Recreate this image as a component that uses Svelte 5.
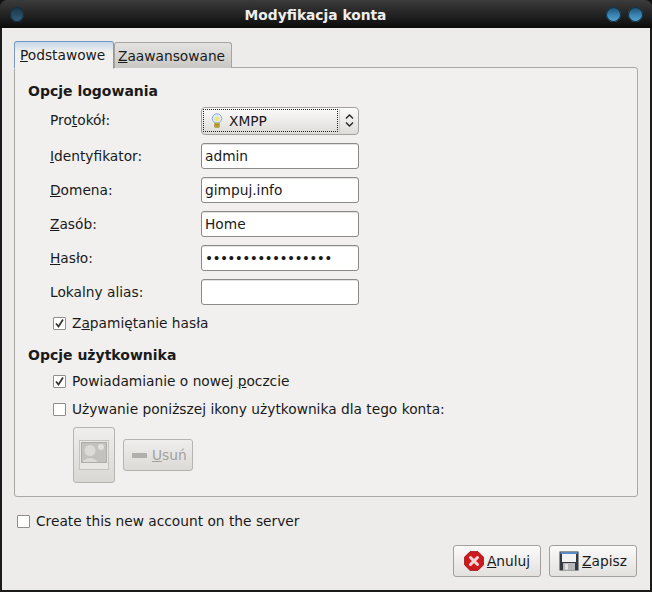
<script>
  const rows = [
    { u: 'I', post: 'dentyfikator:', value: 'admin' },
    { u: 'D', post: 'omena:', value: 'gimpuj.info' },
    { u: 'Z', post: 'asób:', value: 'Home' },
    { u: 'H', post: 'asło:', value: '•••••••••••••••••', pw: true },
    { u: '', post: 'Lokalny alias:', value: '' }
  ];
</script>

<div class="win">
  <header class="titlebar">
    <span class="orb dim"></span>
    <span class="title">Modyfikacja konta</span>
    <span class="orb"></span>
    <span class="orb"></span>
  </header>
  <div class="body">
    <div class="tabs">
      <div class="tab active"><u>P</u>odstawowe</div>
      <div class="tab"><u>Z</u>aawansowane</div>
    </div>
    <section class="panel">
      <h2>Opcje logowania</h2>
      <div class="form">
        <div class="row first">
          <span class="lab up">Pro<u>t</u>okół:</span>
          <div class="combo">
            <div class="combo-main">
              <svg width="12" height="16" viewBox="0 0 12 16">
                <circle cx="6" cy="5.5" r="4.7" fill="#dfecf8" stroke="#86add4" />
                <circle cx="6" cy="6" r="2.4" fill="#f4e27a" />
                <rect x="3.5" y="10" width="5" height="4.5" rx="1" fill="#d8b93c" stroke="#a48a2a" stroke-width=".6" />
                <path d="M4 11.6h4M4 13h4" stroke="#8a7420" stroke-width=".7" />
              </svg>
              <span>XMPP</span>
            </div>
            <svg class="arrows" width="9" height="13" viewBox="0 0 9 13">
              <path d="M1 4.5l3.5-3.5L8 4.5M1 8.5l3.5 3.5L8 8.5" fill="none" stroke="#222" stroke-width="1.3" />
            </svg>
          </div>
        </div>
        {#each rows as r}
          <div class="row">
            <span class="lab">{#if r.u}<u>{r.u}</u>{/if}{r.post}</span>
            <div class="entry" class:pw={r.pw}>{r.value}</div>
          </div>
        {/each}
      </div>
      <div class="check indent rem">
        <span class="box"><svg width="11" height="11" viewBox="0 0 11 11"><path d="M2 5.5l2.5 3L9 1.5" fill="none" stroke="#333" stroke-width="1.7" /></svg></span>
        <span>Z<u>a</u>pamiętanie hasła</span>
      </div>
      <h2 class="second">Opcje użytkownika</h2>
      <div class="check indent">
        <span class="box"><svg width="11" height="11" viewBox="0 0 11 11"><path d="M2 5.5l2.5 3L9 1.5" fill="none" stroke="#333" stroke-width="1.7" /></svg></span>
        <span>Powiadamianie o nowej <u>p</u>oczcie</span>
      </div>
      <div class="check indent next">
        <span class="box"></span>
        <span>Używanie poniższej ikony użytkownika dla tego konta:</span>
      </div>
      <div class="icon-row">
        <div class="avatar-btn">
          <svg width="30" height="30" viewBox="0 0 30 30">
            <rect x=".5" y=".5" width="29" height="29" fill="#e8e7e4" stroke="#c4c3bf" />
            <rect x="2.5" y="2.5" width="25" height="20" fill="#c2c3bf" stroke="#adadaa" />
            <circle cx="11" cy="10.5" r="5.5" fill="#dcdbd7" />
            <circle cx="22" cy="7" r="3" fill="#e2e1dd" />
            <path d="M4 22c1-5 13-5 14 0z" fill="#dbdad6" />
          </svg>
        </div>
        <div class="remove-btn">
          <span class="minus"></span>
          <span><u>U</u>suń</span>
        </div>
      </div>
    </section>
    <div class="check server">
      <span class="box"></span>
      <span>Create this new account on the server</span>
    </div>
    <div class="actions">
      <div class="btn anuluj">
        <svg width="20" height="20" viewBox="0 0 20 20">
          <path d="M6 .7h8L19.3 6v8L14 19.3H6L.7 14V6z" fill="#cc1a1f" stroke="#a31015" />
          <path d="M6.5 6.5l7 7M13.5 6.5l-7 7" stroke="#f3d6d6" stroke-width="3" stroke-linecap="round" />
        </svg>
        <span><u>A</u>nuluj</span>
      </div>
      <div class="btn zapisz">
        <svg width="20" height="20" viewBox="0 0 20 20">
          <rect x=".5" y=".5" width="19" height="19" fill="#33393f" />
          <rect x="1.5" y="1" width="17" height="2" fill="#5a8ac0" />
          <rect x="3" y="3" width="14" height="8" fill="#f2f2f2" />
          <rect x="4" y="12" width="12" height="7.5" fill="#b5b7b8" />
          <rect x="6" y="13" width="3" height="5.5" fill="#e4e4e4" />
        </svg>
        <span><u>Z</u>apisz</span>
      </div>
    </div>
  </div>
</div>

<style>
  :global(body) { margin: 0; background: #111; }
  .win {
    width: 652px; height: 592px; display: flex; flex-direction: column; box-sizing: border-box;
    font-family: "DejaVu Sans", sans-serif; font-size: 13.75px; color: #1a1a1a;
    background: #1b1b1b; border-radius: 7px 7px 0 0; overflow: hidden;
  }
  .titlebar {
    height: 28px; flex: none; display: flex; align-items: center; padding: 1px 9px 0 10px; gap: 7px; box-sizing: border-box;
    background: linear-gradient(#3b3b3b, #0c0c0c);
  }
  .title { flex: 1; text-align: center; color: #eeeeec; font-weight: bold; font-size: 13.8px; padding-left: 22px; }
  .orb {
    width: 15px; height: 15px; border-radius: 50%; flex: none;
    background: linear-gradient(#1d4d6e, #3a86b4 55%, #5aa6d2); box-shadow: inset 0 0 0 1px #12303f;
  }
  .orb.dim { background: linear-gradient(#1a3344, #35607a); width: 14px; margin-right: -21px; }
  .body {
    flex: 1; margin: 0 2px 2px; background: #edeceb; padding: 13px 12px 0; display: flex; flex-direction: column; min-height: 0;
  }
  .tabs { display: flex; height: 27px; flex: none; position: relative; z-index: 1; margin-bottom: -1px; }
  .tab {
    box-sizing: border-box; border: 1px solid #a5a4a1; border-bottom: none; border-radius: 3px 3px 0 0;
    padding: 5px 6px 0 3px; height: 26px; margin-top: 1px; background: linear-gradient(#e4e3e1, #c8c7c4); white-space: nowrap;
  }
  .tab.active {
    height: 28px; margin-top: 0; padding: 5px 0 0 5px; border-color: #7d9bbb; border-top-color: #6f95bc;
    background: linear-gradient(#c6d8ea, #f1f0ee 10px); width: 100px; border-bottom: 1px solid #f1f0ee;
  }
  .panel {
    box-sizing: border-box; height: 430px; flex: none; border: 1px solid #a9a8a5; border-radius: 3px;
    background: #f1f0ee; padding: 15px 13px 0;
  }
  h2 { margin: 0; font-size: 14px; font-weight: bold; line-height: 16px; color: #1a1a1a; }
  h2.second { margin-top: 16px; }
  .form { display: flex; flex-direction: column; gap: 8px; padding-left: 22px; margin-top: 8px; }
  .row { display: flex; align-items: center; height: 26px; }
  .row.first { height: 28px; }
  .lab { width: 151px; flex: none; }
  .lab.up { position: relative; top: -1px; }
  .entry {
    box-sizing: border-box; width: 158px; height: 26px; background: #fff; border: 1px solid #8b8a87; border-radius: 3px;
    padding: 0 3px; line-height: 25px; box-shadow: inset 0 1px 0 #e2e2e2;
  }
  .entry.pw { letter-spacing: -.66px; }
  .combo {
    box-sizing: border-box; width: 158px; height: 28px; border: 1px solid #a2a19e; border-radius: 4px;
    background: linear-gradient(#fbfbfa, #dddcd9); display: flex; align-items: center; padding: 1px 4px 2px 1px;
  }
  .combo-main {
    flex: 1; height: 100%; box-sizing: border-box; border: 1px dotted #222; display: flex; align-items: center; gap: 6px; padding-left: 7px; margin-right: 1px;
  }
  .arrows { padding: 5px 0 5px 5px; border-left: 1px solid #cfcecb; }
  .check { display: flex; align-items: center; gap: 6px; height: 16px; }
  .indent { padding-left: 25px; }
  .rem { margin-top: 10px; }
  .second + .check { margin-top: 10px; }
  .next { margin-top: 12px; }
  .box {
    box-sizing: border-box; width: 13px; height: 13px; border: 1px solid #8f8e8b; background: #fff; border-radius: 1px; display: flex; align-items: center; justify-content: center; flex: none;
  }
  .icon-row { display: flex; align-items: flex-end; gap: 8px; padding-left: 45px; margin-top: 10px; }
  .avatar-btn {
    box-sizing: border-box; width: 42px; height: 56px; border: 1px solid #b5b4b1; border-radius: 3px;
    background: linear-gradient(#efeeec, #d9d8d5); display: flex; align-items: center; justify-content: center;
  }
  .remove-btn {
    box-sizing: border-box; width: 70px; height: 32px; margin-bottom: 12px; border: 1px solid #b5b4b1; border-radius: 3px;
    background: linear-gradient(#efeeec, #dbdad7); display: flex; align-items: center; gap: 5px; padding-left: 8px; color: #a3a2a0;
  }
  .minus { width: 15px; height: 5px; background: #b0afac; flex: none; }
  .server { margin-top: 16px; padding-left: 3px; }
  .actions { display: flex; justify-content: flex-end; gap: 8px; margin-top: 16px; padding-right: 1px; }
  .btn {
    box-sizing: border-box; height: 32px; border: 1px solid #a2a19e; border-radius: 3px; background: linear-gradient(#fafaf9, #e2e1de);
    display: flex; align-items: center; gap: 3px; justify-content: center;
  }
  .anuluj { width: 88px; }
  .zapisz { width: 88px; }
</style>
